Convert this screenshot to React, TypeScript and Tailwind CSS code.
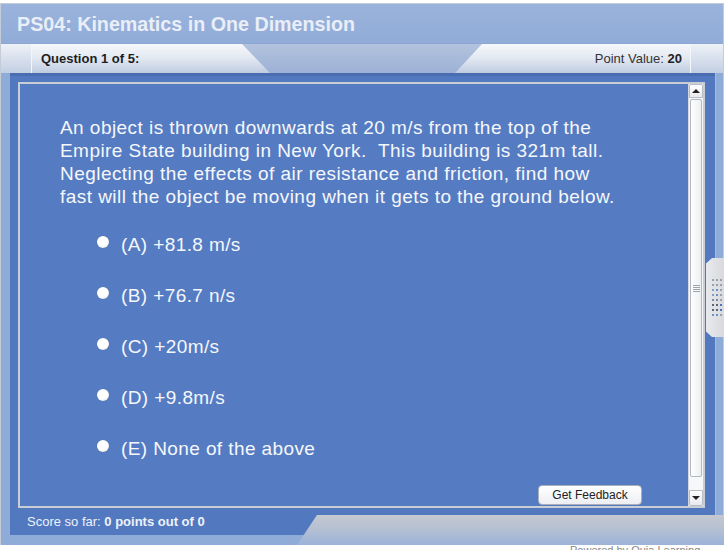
import React from "react"

const question = [
  "An object is thrown downwards at 20 m/s from the top of the",
  "Empire State building in New York.  This building is 321m tall.",
  "Neglecting the effects of air resistance and friction, find how",
  "fast will the object be moving when it gets to the ground below.",
]

const options = ["(A) +81.8 m/s", "(B) +76.7 n/s", "(C) +20m/s", "(D) +9.8m/s", "(E) None of the above"]

const dotColors = [
  "bg-[#9aa0a8]", "bg-[#9aa0a8]", "bg-[#9aa0a8]",
  "bg-[#9aa0a8]", "bg-[#9aa0a8]", "bg-[#9aa0a8]",
  "bg-[#8a9cbc]", "bg-[#6d8fc9]", "bg-[#9aa0a8]",
  "bg-[#8a9cbc]", "bg-[#6d8fc9]", "bg-[#9aa0a8]",
  "bg-[#7a8aa4]", "bg-[#7a8aa4]", "bg-[#9aa0a8]",
  "bg-[#5a6478]", "bg-[#5a6478]", "bg-[#4a74c0]",
  "bg-[#5a6478]", "bg-[#5a6478]", "bg-[#4a74c0]",
  "bg-[#6d8fc9]", "bg-[#6d8fc9]", "bg-[#9aa0a8]",
]

function Scrollbar() {
  return (
    <div className="w-[15px] flex flex-col bg-[#f6f7f9] border-l border-[#d4d8de]">
      <div className="h-[14px] flex items-center justify-center bg-gradient-to-b from-[#ffffff] to-[#e8eaee] border border-[#b8bcc4] rounded-t-[2px]">
        <div className="w-0 h-0 border-l-[4px] border-r-[4px] border-b-[4px] border-l-transparent border-r-transparent border-b-[#222]" />
      </div>
      <div className="mt-[1px] mx-[1px] h-[378px] bg-gradient-to-r from-[#ffffff] to-[#eceef2] border border-[#b4b8c0] rounded-[2px] flex items-center justify-center">
        <div className="flex flex-col gap-[1px]">
          <div className="w-[7px] h-[1px] bg-[#a0a4ac]" />
          <div className="w-[7px] h-[1px] bg-[#a0a4ac]" />
          <div className="w-[7px] h-[1px] bg-[#a0a4ac]" />
          <div className="w-[7px] h-[1px] bg-[#a0a4ac]" />
        </div>
      </div>
      <div className="flex-1" />
      <div className="h-[16px] flex items-center justify-center bg-gradient-to-b from-[#ffffff] to-[#e8eaee] border border-[#b8bcc4] rounded-b-[2px]">
        <div className="w-0 h-0 border-l-[4px] border-r-[4px] border-t-[4px] border-l-transparent border-r-transparent border-t-[#222]" />
      </div>
    </div>
  )
}

export default function App() {
  return (
    <div className="w-[724px] h-[550px] bg-white relative overflow-hidden font-['Liberation_Sans',Arial,sans-serif]">
      <div className="mt-[3px] h-[542px] flex flex-col bg-[#8fabd8] border-t border-l border-r border-[#c4ccd8]">
        {/* header */}
        <div className="h-[39px] flex items-center pl-[16px] pt-[3px] bg-gradient-to-b from-[#9ab3dc] to-[#91acd8]">
          <h1 className="text-[19.7px] font-bold text-[#e9eef7] leading-none">PS04: Kinematics in One Dimension</h1>
        </div>

        {/* tab bar */}
        <div className="h-[30px] flex bg-gradient-to-b from-[#b3c3de] to-[#9db1d6] border-t border-[#8ea7d0]">
          <div className="w-[31px] bg-gradient-to-b from-[#eef2f8] to-[#c2cee2] border-r border-[#f4f6fa]" />
          <div className="w-[238px] flex items-center pl-[9px] bg-gradient-to-b from-[#f6f8fb] via-[#e2e8f1] to-[#bfcce1] [clip-path:polygon(0_0,210px_0,238px_100%,0_100%)]">
            <span className="text-[13px] font-bold text-[#1e1e1e]">Question 1 of 5:</span>
          </div>
          <div className="flex-1" />
          <div className="w-[235px] flex items-center justify-end pr-[8px] bg-gradient-to-b from-[#f6f8fb] via-[#e2e8f1] to-[#bfcce1] [clip-path:polygon(27px_0,100%_0,100%_100%,0_100%)]">
            <span className="text-[13px] text-[#333]">
              Point Value: <b className="text-[#222]">20</b>
            </span>
          </div>
          <div className="flex-1 max-w-[33px] bg-gradient-to-b from-[#eef2f8] to-[#c2cee2] border-l border-[#f4f6fa]" />
        </div>

        {/* main */}
        <div className="flex">
          <div className="w-[9px]" />
          <div className="w-[705px] h-[462px] flex flex-col bg-[#5279c0] border-t-[3px] border-[#4a6cb0]">
            <div className="pt-[6px] pl-[8px]">
              <div className="w-[687px] h-[426px] flex border-2 border-[#c9cdd5] bg-[#557cc2]">
                <div className="flex-1 flex flex-col pl-[40px] pt-[32px]">
                  <p className="text-[19px] leading-[23px] tracking-[0.45px] text-[#f5f7fb]">
                    {question.map((l, i) => (
                      <span key={i} className="block whitespace-pre">{l}</span>
                    ))}
                  </p>
                  <div className="mt-[26px] pl-[37px] flex flex-col gap-[28px]">
                    {options.map((o) => (
                      <label key={o} className="h-[23px] flex items-center text-[19px] tracking-[0.4px] text-[#f5f7fb]">
                        <span className="w-[12px] h-[12px] rounded-full bg-[radial-gradient(circle_at_40%_35%,#ffffff_55%,#c9ccd2)] shadow-[0_0_1px_#5a6478] -translate-y-[4px] mr-[12px]" />
                        {o}
                      </label>
                    ))}
                  </div>
                  <div className="mt-auto self-end mr-[46px]">
                    <button className="w-[104px] h-[20px] rounded-[4px] border border-[#a9b0bb] bg-gradient-to-b from-[#ffffff] to-[#eceef2] text-[12px] text-[#222] leading-none">
                      Get Feedback
                    </button>
                  </div>
                </div>
                <Scrollbar />
              </div>
            </div>
            <div className="flex-1 flex items-center pl-[17px] text-[13px] text-[#eef2fa]">
              <span>
                Score so far: <b>0 points out of 0</b>
              </span>
            </div>
          </div>
          <div className="flex-1 border-l border-[#a3bbe0]" />
        </div>
      </div>

      {/* bottom gray bar */}
      <div className="absolute left-[297px] top-[515px] w-[427px] h-[30px] bg-gradient-to-b from-[#c5c9d0] via-[#b3bfd2] to-[#9bb3da] [clip-path:polygon(20px_0,100%_0,100%_100%,0_100%)]" />

      {/* side handle */}
      <div className="absolute left-[706px] top-[258px] w-[18px] h-[79px] bg-gradient-to-r from-[#e8e9ec] to-[#d8dade] [clip-path:polygon(6px_0,100%_0,100%_100%,6px_100%,0_93%,0_7%)] flex items-center justify-center">
        <div className="grid grid-cols-3 gap-x-[2px] gap-y-[3px] ml-[3px]">
          {dotColors.map((c, i) => (
            <div key={i} className={`w-[2px] h-[2px] ${c}`} />
          ))}
        </div>
      </div>

      <div className="absolute left-[570px] top-[545px] text-[11px] leading-none text-[#888]">
        Powered by Quia Learning Center
      </div>
    </div>
  )
}
